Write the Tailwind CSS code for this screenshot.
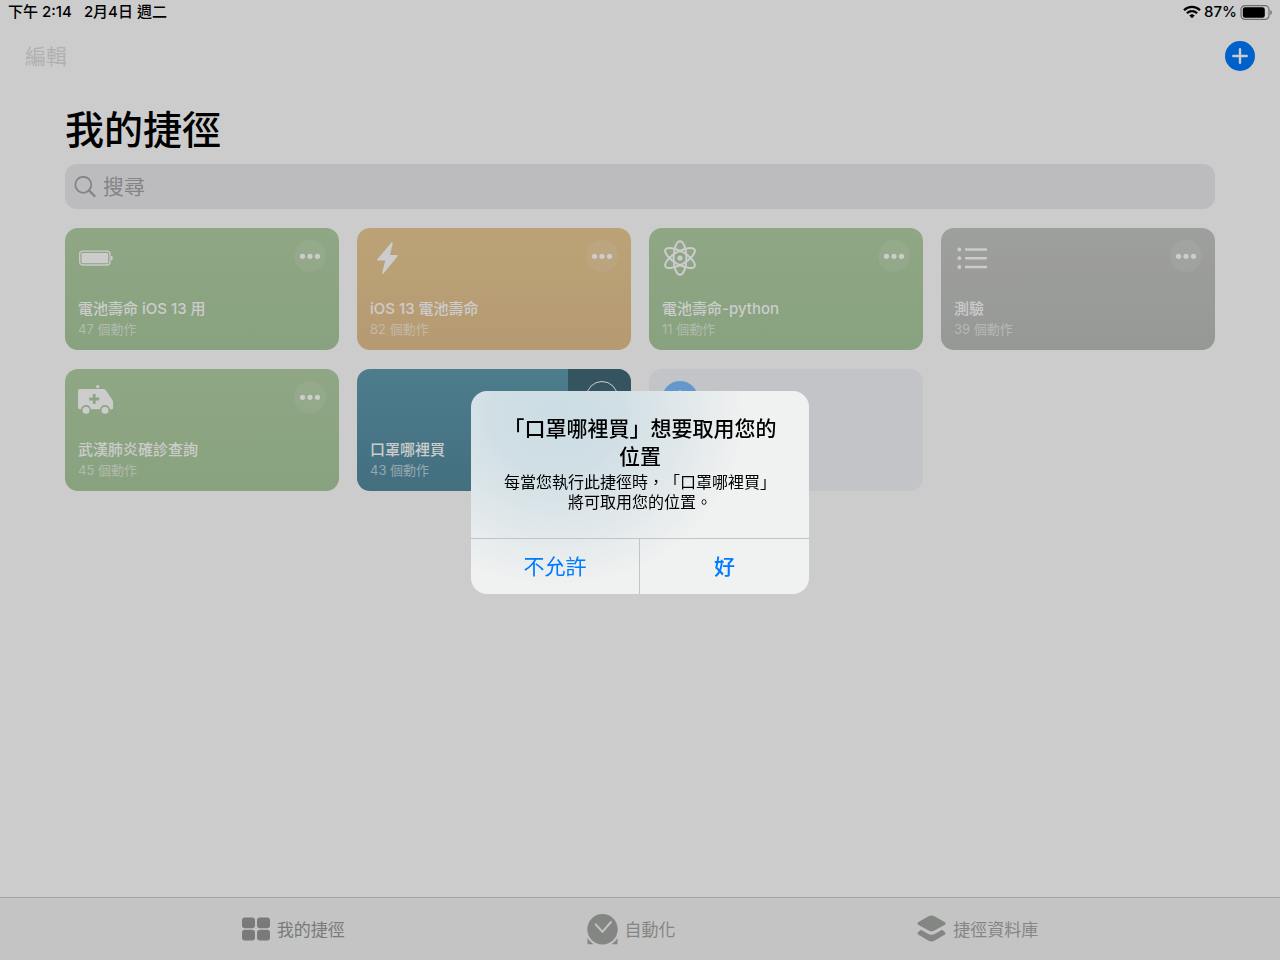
<!DOCTYPE html>
<html lang="zh-Hant">

<head>
    <meta charset="UTF-8">
    <meta name="viewport" content="width=device-width, initial-scale=1.0">
    <script src="https://cdn.jsdelivr.net/npm/@tailwindcss/browser@4"></script>
    <title>捷徑</title>
</head>

<body class="min-h-screen flex flex-col bg-white text-black font-['Inter','Noto_Sans_CJK_TC',sans-serif]">
    <!-- status bar -->
    <div class="flex items-center justify-between h-6 px-2 text-[15px] font-medium">
        <div class="flex gap-3">
            <span>下午 2:14</span>
            <span>2月4日 週二</span>
        </div>
        <div class="flex items-center gap-[3px]">
            <svg class="w-[18px] h-[14px]" viewBox="0 0 18 14" fill="none" stroke="currentColor" stroke-width="2.3">
                <path d="M1 5.2a11.4 11.4 0 0 1 16 0" />
                <path d="M3.9 8.2a7.3 7.3 0 0 1 10.2 0" />
                <path d="M9 13.2l-2.7-2.7a3.8 3.8 0 0 1 5.4 0z" fill="currentColor" stroke="none" />
            </svg>
            <span>87%</span>
            <svg class="w-8 h-[15px]" viewBox="0 0 32 15" fill="none">
                <rect x="1" y=".6" width="28" height="13.8" rx="4" stroke="#8a8a8a" stroke-width="1.2" />
                <rect x="2.8" y="2.2" width="22" height="10.6" rx="2.4" fill="#000" />
                <path d="M30.4 5v5c1.9-.8 1.9-4.2 0-5z" fill="#8a8a8a" />
            </svg>
        </div>
    </div>

    <!-- nav -->
    <header class="flex items-center justify-between h-16 px-[25px]">
        <button class="text-[21px] text-[#dedede] font-['Noto_Sans_CJK_TC',sans-serif]">編輯</button>
        <button aria-label="新增捷徑" class="w-[30px] h-[30px] rounded-full bg-[#007aff]">
            <svg viewBox="0 0 30 30" fill="none" stroke="#fff" stroke-width="2.4" stroke-linecap="round">
                <path d="M15 8.3v13.4M8.3 15h13.4" />
            </svg>
        </button>
    </header>

    <main class="grow px-[65px]">
        <h1 class="mt-3 text-[39px] leading-[54px] font-medium font-['Noto_Sans_CJK_TC',sans-serif]">我的捷徑</h1>
        <label class="flex items-center gap-[7px] mt-[10px] h-[45px] px-[9px] rounded-xl bg-[#ececef] text-[#a5a6a9]">
            <svg class="w-[22px] h-[22px]" viewBox="0 0 22 22" fill="none" stroke="currentColor" stroke-linecap="round">
                <circle cx="9.3" cy="8.8" r="8" stroke-width="1.8" />
                <path d="M15 14.5l5.5 5.5" stroke-width="2.4" />
            </svg>
            <input type="search" placeholder="搜尋" aria-label="搜尋"
                class="grow text-[21px] leading-7 bg-transparent outline-none placeholder:text-[#a5a6a9]">
        </label>

        <div class="grid grid-cols-2 md:grid-cols-4 gap-x-[18px] gap-y-[19px] mt-[19px]">
            <article
                class="flex flex-col justify-between h-[122px] px-[13px] pt-3 pb-[11px] rounded-[13px] bg-linear-to-b from-[#b3d1a6] to-[#abca9e] text-white">
                <div class="flex justify-between items-start">
                    <svg class="w-9 h-9" viewBox="0 0 36 36" fill="none">
                        <rect x="1.7" y="11.2" width="30.3" height="13.8" rx="3" stroke="#fff" stroke-width="1.3" />
                        <rect x="3.5" y="13" width="26.7" height="10.2" rx="1.2" fill="#fff" />
                        <path d="M33 16h.6a1 1 0 0 1 1 1v2.2a1 1 0 0 1-1 1H33z" fill="#fff" />
                    </svg>
                    <button aria-label="更多" class="w-8 h-8 rounded-full bg-white/10">
                        <svg viewBox="0 0 32 32" fill="#fff">
                            <circle cx="8.5" cy="16.3" r="2.6" />
                            <circle cx="16" cy="16.3" r="2.6" />
                            <circle cx="23.5" cy="16.3" r="2.6" />
                        </svg>
                    </button>
                </div>
                <div>
                    <h2 class="text-[15px] leading-[21px] font-medium">電池壽命 iOS 13 用</h2>
                    <p class="text-[13px] leading-5 text-white/60">47 個動作</p>
                </div>
            </article>

            <article
                class="flex flex-col justify-between h-[122px] px-[13px] pt-3 pb-[11px] rounded-[13px] bg-linear-to-b from-[#eacc95] to-[#e4c18f] text-white">
                <div class="flex justify-between items-start">
                    <svg class="w-9 h-9" viewBox="0 0 36 36" fill="#fff" stroke="#fff" stroke-linejoin="round">
                        <path d="M22 3L8 19.8h8.3L12.9 33L27 15.8h-8z" stroke-width="1.6" />
                    </svg>
                    <button aria-label="更多" class="w-8 h-8 rounded-full bg-white/10">
                        <svg viewBox="0 0 32 32" fill="#fff">
                            <circle cx="8.5" cy="16.3" r="2.6" />
                            <circle cx="16" cy="16.3" r="2.6" />
                            <circle cx="23.5" cy="16.3" r="2.6" />
                        </svg>
                    </button>
                </div>
                <div>
                    <h2 class="text-[15px] leading-[21px] font-medium">iOS 13 電池壽命</h2>
                    <p class="text-[13px] leading-5 text-white/60">82 個動作</p>
                </div>
            </article>

            <article
                class="flex flex-col justify-between h-[122px] px-[13px] pt-3 pb-[11px] rounded-[13px] bg-linear-to-b from-[#b3d1a6] to-[#abca9e] text-white">
                <div class="flex justify-between items-start">
                    <svg class="w-9 h-9" viewBox="0 0 36 36" fill="none" stroke="#fff" stroke-width="2">
                        <ellipse cx="18" cy="18" rx="6.4" ry="16.8" />
                        <ellipse cx="18" cy="18" rx="6.4" ry="16.8" transform="rotate(60 18 18)" />
                        <ellipse cx="18" cy="18" rx="6.4" ry="16.8" transform="rotate(120 18 18)" />
                        <circle cx="18" cy="18" r="2.6" fill="#fff" stroke="none" />
                    </svg>
                    <button aria-label="更多" class="w-8 h-8 rounded-full bg-white/10">
                        <svg viewBox="0 0 32 32" fill="#fff">
                            <circle cx="8.5" cy="16.3" r="2.6" />
                            <circle cx="16" cy="16.3" r="2.6" />
                            <circle cx="23.5" cy="16.3" r="2.6" />
                        </svg>
                    </button>
                </div>
                <div>
                    <h2 class="text-[15px] leading-[21px] font-medium">電池壽命-python</h2>
                    <p class="text-[13px] leading-5 text-white/60">11 個動作</p>
                </div>
            </article>

            <article
                class="flex flex-col justify-between h-[122px] px-[13px] pt-3 pb-[11px] rounded-[13px] bg-linear-to-b from-[#c6c8c5] to-[#bcbfbc] text-white">
                <div class="flex justify-between items-start">
                    <svg class="w-9 h-9" viewBox="0 0 36 36" fill="#fff" stroke="#fff" stroke-width="2.4"
                        stroke-linecap="round">
                        <path d="M12 9.5h20M12 18.2h20M12 27h20" />
                        <circle cx="5.3" cy="9.5" r="1.9" stroke="none" />
                        <circle cx="5.3" cy="18.2" r="1.9" stroke="none" />
                        <circle cx="5.3" cy="27" r="1.9" stroke="none" />
                    </svg>
                    <button aria-label="更多" class="w-8 h-8 rounded-full bg-white/10">
                        <svg viewBox="0 0 32 32" fill="#fff">
                            <circle cx="8.5" cy="16.3" r="2.6" />
                            <circle cx="16" cy="16.3" r="2.6" />
                            <circle cx="23.5" cy="16.3" r="2.6" />
                        </svg>
                    </button>
                </div>
                <div>
                    <h2 class="text-[15px] leading-[21px] font-medium">測驗</h2>
                    <p class="text-[13px] leading-5 text-white/60">39 個動作</p>
                </div>
            </article>

            <article
                class="flex flex-col justify-between h-[122px] px-[13px] pt-3 pb-[11px] rounded-[13px] bg-linear-to-b from-[#b3d1a6] to-[#abca9e] text-white">
                <div class="flex justify-between items-start">
                    <svg class="w-9 h-9" viewBox="0 0 36 36">
                        <circle cx="19.8" cy="5.6" r="1.7" fill="#fff" />
                        <path fill="#fff"
                            d="M2 8h23c1.4 0 2.4.6 3.2 1.7l6.2 9.3c.5.8.7 1.5.7 2.4v5.4c0 1-.6 1.5-1.5 1.5H2c-1.2 0-2-.8-2-2V10c0-1.2.8-2 2-2z" />
                        <circle cx="8" cy="29" r="5" fill="#b0cea3" />
                        <circle cx="27" cy="29" r="5" fill="#b0cea3" />
                        <circle cx="8" cy="29.2" r="3.5" fill="#fff" />
                        <circle cx="27" cy="29.2" r="3.5" fill="#fff" />
                        <path d="M16.2 13v10M11.2 18h10" stroke="#b1cfa4" stroke-width="2.8" />
                    </svg>
                    <button aria-label="更多" class="w-8 h-8 rounded-full bg-white/10">
                        <svg viewBox="0 0 32 32" fill="#fff">
                            <circle cx="8.5" cy="16.3" r="2.6" />
                            <circle cx="16" cy="16.3" r="2.6" />
                            <circle cx="23.5" cy="16.3" r="2.6" />
                        </svg>
                    </button>
                </div>
                <div>
                    <h2 class="text-[15px] leading-[21px] font-medium">武漢肺炎確診查詢</h2>
                    <p class="text-[13px] leading-5 text-white/60">45 個動作</p>
                </div>
            </article>

            <!-- running shortcut -->
            <article
                class="flex h-[122px] rounded-[13px] overflow-hidden bg-linear-to-b from-[#609db0] to-[#548ba0] text-white">
                <div class="flex flex-col justify-end grow pl-[13px] pb-[11px]">
                    <h2 class="text-[15px] leading-[21px] font-medium">口罩哪裡買</h2>
                    <p class="text-[13px] leading-5 text-white/60">43 個動作</p>
                </div>
                <div class="flex justify-end items-start w-[63px] pt-3 pr-[13px] bg-[#426b79]">
                    <button aria-label="停止" class="w-8 h-8 rounded-full border border-white"></button>
                </div>
            </article>

            <button aria-label="製作捷徑" class="flex items-start h-[122px] px-[13px] pt-3 rounded-[13px] bg-[#f4f5fb]">
                <svg class="w-9 h-9" viewBox="0 0 36 36">
                    <circle cx="18" cy="18" r="18" fill="#80bdff" />
                    <path d="M18 10.6v14.8M10.6 18h14.8" stroke="#fff" stroke-width="2.6" stroke-linecap="round" />
                </svg>
            </button>
        </div>
    </main>

    <nav
        class="flex items-center justify-evenly h-[63px] border-t border-[#cdcdcd] bg-[#f5f5f5] text-[17px] text-[#a5a8a6] font-['Noto_Sans_CJK_TC',sans-serif]">
        <a href="#" class="flex items-center gap-[7px] text-[#969a98]">
            <svg class="w-7 h-6" viewBox="0 0 28 24" fill="currentColor">
                <rect y=".5" width="13" height="10.7" rx="3" />
                <rect x="15" y=".5" width="13" height="10.7" rx="3" />
                <rect y="12.8" width="13" height="10.7" rx="3" />
                <rect x="15" y="12.8" width="13" height="10.7" rx="3" />
            </svg>
            我的捷徑
        </a>
        <a href="#" class="flex items-center gap-[7px]">
            <svg class="w-[31px] h-[31px]" viewBox="0 0 31 31" fill="currentColor">
                <circle cx="15.5" cy="15.3" r="15.2" />
                <path d="M.5 24q2 3.6 6 6.2H.5zM30.5 24q-2 3.6-6 6.2h6z" />
                <path d="M8.8 10.3l6.6 7.5L24 8" fill="none" stroke="#f5f5f5" stroke-width="1.9"
                    stroke-linecap="round" stroke-linejoin="round" />
            </svg>
            自動化
        </a>
        <a href="#" class="flex items-center gap-[7px]">
            <svg class="w-[29px] h-7" viewBox="0 0 29 28" fill="currentColor">
                <path
                    d="M11.6 1.2q2.9-1.6 5.800 0l10.100 5.700q2.200 1.500 0 3l-10.100 5.700q-2.900 1.600-5.800 0L1.500 9.900q-2.200-1.500 0-3z" />
                <path
                    d="M4 14.800l6.900 3.900q3.600 2 7.200 0l6.900-3.900 2.500 1.900q2 1.500 0 3l-10.100 6.100q-2.900 1.600-5.800 0L1.500 19.700q-2-1.500 0-3z" />
            </svg>
            捷徑資料庫
        </a>
    </nav>

    <!-- location alert -->
    <div class="fixed inset-0 flex items-center justify-center pt-[25px] bg-black/20">
        <div role="alertdialog" aria-labelledby="alert-title" aria-describedby="alert-text"
            class="w-[338px] rounded-2xl overflow-hidden text-center bg-[#f0f1f1] bg-[radial-gradient(ellipse_56%_84%_at_25%_12%,#cbdde4_0%,#d1dfe5_35%,#e4eaec_75%,#f0f1f1_100%)]">
            <div class="px-6 pt-6 pb-[26px] [text-spacing-trim:space-all]">
                <h2 id="alert-title" class="text-[21px] leading-7 font-medium">「口罩哪裡買」想要取用您的<br>位置</h2>
                <p id="alert-text" class="mt-px text-base leading-5">每當您執行此捷徑時，「口罩哪裡買」<br>將可取用您的位置。</p>
            </div>
            <div
                class="grid grid-cols-2 h-14 border-t border-[#c2c4c5] divide-x divide-[#c2c4c5] text-[21px] text-[#007aff]">
                <button>不允許</button>
                <button class="font-medium">好</button>
            </div>
        </div>
    </div>
</body>

</html>
